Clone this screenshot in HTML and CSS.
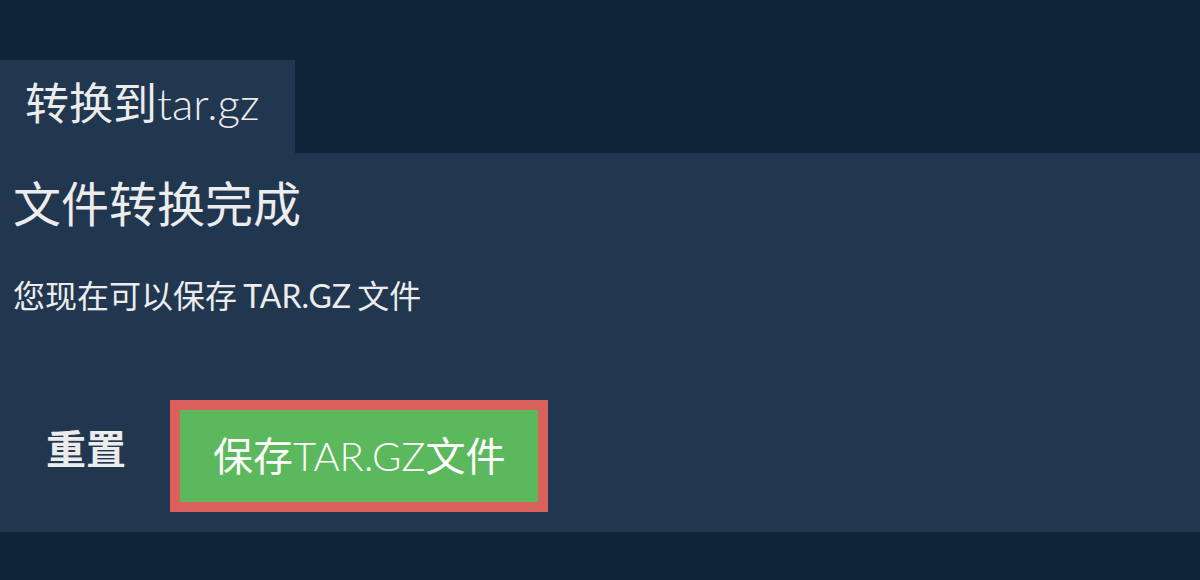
FILE: index.html
```html
<!DOCTYPE html>
<html lang="zh">
<head>
<meta charset="utf-8">
<title>转换到tar.gz</title>
<link rel="stylesheet" href="styles.css">
</head>
<body>
<div class="page">
  <div class="tabs">
    <div class="tab">转换到<span class="light">tar.gz</span></div>
  </div>
  <section class="panel">
    <h1 class="title">文件转换完成</h1>
    <p class="subtitle">您现在可以保存 TAR.GZ 文件</p>
    <div class="actions">
      <button class="btn-reset" type="button">重置</button>
      <button class="btn-save" type="button">保存<span class="light">TAR.GZ</span>文件</button>
    </div>
  </section>
</div>
</body>
</html>
```

FILE: styles.css
```css
html, body {
  margin: 0;
  padding: 0;
}
body {
  background: #0f2339;
  color: #ececec;
  font-family: "Lato", "Noto Sans CJK SC", sans-serif;
  width: 1200px;
  height: 580px;
  overflow: hidden;
}
.page {
  padding-top: 60px;
}
.tabs {
  display: flex;
}
.tab {
  background: #21364f;
  width: 295px;
  box-sizing: border-box;
  padding: 0 0 7px 25px;
  font-size: 44px;
  line-height: 86px;
  font-weight: 400;
  color: #ececec;
}
.light {
  font-weight: 300;
}
.panel {
  background: #21364f;
  height: 379px;
  box-sizing: border-box;
  padding: 0 13px;
  display: flex;
  flex-direction: column;
}
.title {
  margin: 22px 0 0 0;
  font-size: 48px;
  line-height: 58px;
  font-weight: 400;
}
.subtitle {
  margin: 43px 0 0 0;
  font-size: 32px;
  line-height: 40px;
  font-weight: 400;
  word-spacing: -2px;
}
.actions {
  margin-top: 84px;
  display: flex;
  align-items: flex-start;
  gap: 12px;
}
.btn-reset {
  font-family: inherit;
  background: transparent;
  border: 0;
  color: #ececec;
  font-size: 40px;
  font-weight: 700;
  line-height: 92px;
  padding: 0 32px 0 33px;
  margin-top: 3px;
}
.btn-save {
  font-family: inherit;
  background: #5cb85c;
  border: 10px solid #d9605b;
  color: #ffffff;
  font-size: 40px;
  font-weight: 400;
  line-height: 92px;
  height: 112px;
  box-sizing: border-box;
  padding: 0 33px;
}
```
